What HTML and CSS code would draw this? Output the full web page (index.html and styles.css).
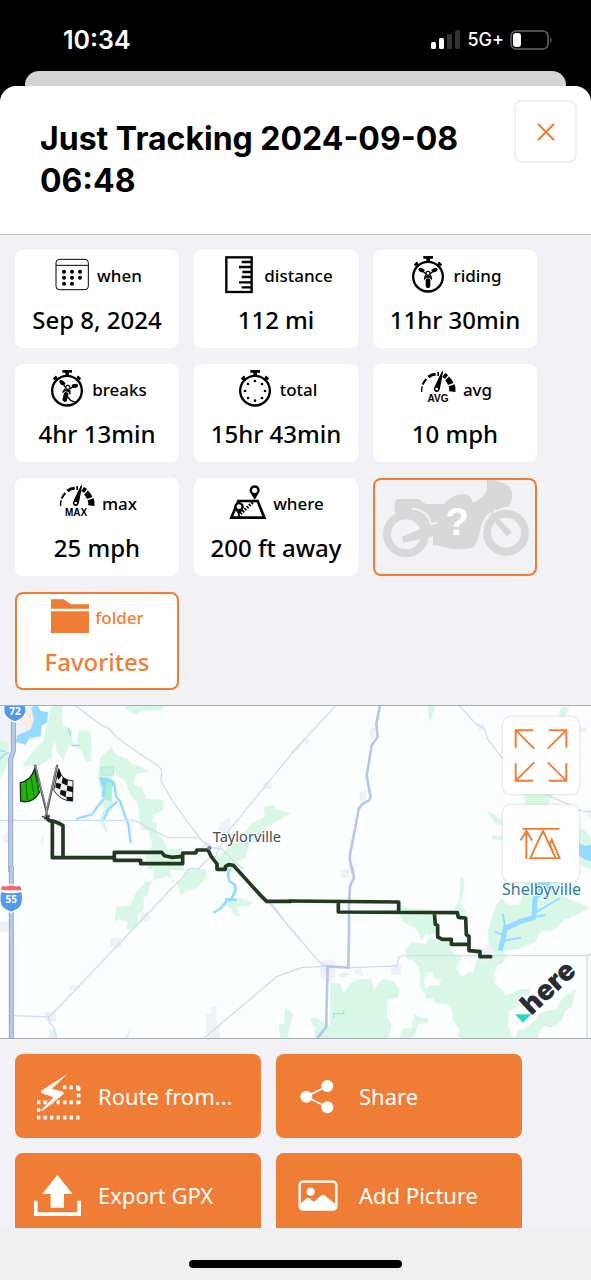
FILE: index.html
```
<!DOCTYPE html>
<html lang="en">
<head>
<meta charset="utf-8">
<meta name="viewport" content="width=device-width, initial-scale=1">
<title>Just Tracking 2024-09-08 06:48</title>
<link rel="stylesheet" href="styles.css">
</head>
<body>
<svg class="defs" aria-hidden="true">
  <symbol id="stopwatch" viewBox="0 0 120 120">
    <circle cx="60" cy="65" r="44.500" fill="none" stroke="#000" stroke-width="7"/>
    <path d="M46 3h29v8h-9v9H55v-9h-9z"/>
    <path d="M20 31l9-9M100 31l-9-9M25 26l7 8M95 26l-7 8" stroke="#000" stroke-width="7"/>
  </symbol>
  <symbol id="bike-front" viewBox="0 0 120 120">
    <path d="M31 43q0-5 7-5l9 4q6 4 1 8-7 4-12 0-5-3-5-7zM89 43q0-5-7-5l-9 4q-6 4-1 8 7 4 12 0 5-3 5-7z"/>
    <path d="M44 49l10 8M76 49l-10 8M53 60l-4 13M67 60l4 13" stroke="#000" stroke-width="4" fill="none"/>
    <circle cx="60" cy="55" r="6" fill="#fff" stroke="#000" stroke-width="4"/>
    <path d="M51 62h18l3 13-7-7H55l-7 7z"/>
    <rect x="53" y="70" width="14" height="29" rx="6"/>
  </symbol>
  <symbol id="gauge" viewBox="0 0 120 120">
    <g fill="none" stroke="#000">
      <path d="M11 69q-1-10 2-17" stroke-width="4"/>
      <path d="M14 47q4-10 11-17" stroke-width="6"/>
      <path d="M31 24q10-8 22-8" stroke-width="9"/>
      <path d="M58 15h5" stroke-width="12"/>
      <path d="M77 18l9 6" stroke-width="15"/>
      <path d="M87 29q8 7 11 16" stroke-width="17"/>
      <path d="M101 49q3 9 2 19" stroke-width="19"/>
      <path d="M57 58l16-49" stroke-width="4"/>
    </g>
    <path d="M75 3l-3 25-7 34q-4 10-13 6-7-5-3-13l14-30z"/>
    <circle cx="56" cy="60" r="4" fill="#fff"/>
  </symbol>
</svg>

<header class="status">
  <span class="clock">10:34</span>
  <span class="status-right">
    <svg class="signal" viewBox="0 0 30 20" aria-hidden="true"><g fill="#fff"><rect y="12" width="5" height="7" rx="1.500"/><rect x="8" y="8" width="5" height="11" rx="1.500"/></g><g fill="#333"><rect x="16" y="4" width="5" height="15" rx="1.500"/><rect x="24" width="5" height="19" rx="1.500"/></g></svg>
    <span class="network">5G+</span>
    <svg class="battery" viewBox="0 0 42 20" aria-hidden="true"><rect x="1" y="1" width="37" height="18" rx="5" fill="none" stroke="#666" stroke-width="1.500"/><rect x="3" y="3" width="8" height="14" rx="3" fill="#fff"/><path d="M40 7q3 3 0 6z" fill="#666"/></svg>
  </span>
</header>
<div class="back-sheet"></div>
<main class="sheet">
  <div class="title-bar">
    <h1>Just Tracking 2024-09-08 06:48</h1>
    <button class="close" aria-label="Close"><svg viewBox="0 0 18 18"><path d="M1 1l16 16M17 1L1 17"/></svg></button>
  </div>

  <section class="stats">
    <div class="card">
      <div class="label"><svg viewBox="0 0 120 120"><rect x="12" y="13" width="97" height="91" rx="10" fill="none" stroke="#000" stroke-width="3"/><path d="M12 31h97" stroke="#000" stroke-width="3"/><path d="M36 50h.1M60 50h.1M84 50h.1M36 68h.1M60 68h.1M84 68h.1M36 86h.1M60 86h.1" stroke="#000" stroke-width="12" stroke-linecap="round"/></svg><span>when</span></div>
      <div class="value">Sep 8, 2024</div>
    </div>
    <div class="card">
      <div class="label"><svg viewBox="0 0 120 120"><rect x="22" y="7" width="76" height="104" fill="none" stroke="#000" stroke-width="7"/><path d="M68 21h30M60 36h38M70 51h28M68 66h30M60 82h38M68 97h30" stroke="#000" stroke-width="7"/></svg><span>distance</span></div>
      <div class="value">112 mi</div>
    </div>
    <div class="card">
      <div class="label"><svg viewBox="0 0 120 120"><use href="#stopwatch"/><use href="#bike-front"/></svg><span>riding</span></div>
      <div class="value">11hr 30min</div>
    </div>
    <div class="card">
      <div class="label"><svg viewBox="0 0 120 120"><use href="#stopwatch"/><g transform="rotate(14 60 65)"><use href="#bike-front"/></g><path d="M62 84l9 10 12 5" fill="none" stroke="#000" stroke-width="4"/></svg><span>breaks</span></div>
      <div class="value">4hr 13min</div>
    </div>
    <div class="card">
      <div class="label"><svg viewBox="0 0 120 120"><use href="#stopwatch"/><path d="M60 36h.1M81 45h.1M90 66h.1M81 87h.1M60 95h.1M39 87h.1M30 66h.1M39 45h.1" stroke="#000" stroke-width="8" stroke-linecap="round"/></svg><span>total</span></div>
      <div class="value">15hr 43min</div>
    </div>
    <div class="card">
      <div class="label"><svg viewBox="0 0 120 120"><use href="#gauge"/><text class="gauge-text" x="60" y="100">AVG</text></svg><span>avg</span></div>
      <div class="value">10 mph</div>
    </div>
    <div class="card">
      <div class="label"><svg viewBox="0 0 120 120"><use href="#gauge"/><text class="gauge-text" x="57" y="100">MAX</text></svg><span>max</span></div>
      <div class="value">25 mph</div>
    </div>
    <div class="card">
      <div class="label"><svg viewBox="0 0 120 120"><path d="M31 54h58l20 50H10z" fill="none" stroke="#000" stroke-width="8"/><path d="M31 99l48-46" stroke="#000" stroke-width="9" stroke-dasharray="5 4"/><path d="M80 50L67 29a15 15 0 1 1 26 0zM33 97L21 79a14 14 0 1 1 24 0z" /><circle cx="80" cy="22" r="8" fill="#fff"/><circle cx="33" cy="71" r="7" fill="#fff"/></svg><span>where</span></div>
      <div class="value">200 ft away</div>
    </div>
    <button class="card bike" aria-label="Choose motorcycle">
      <svg viewBox="45 40 478 282">
        <g fill="none" stroke="#d8d8d8" stroke-width="24"><circle cx="137" cy="203" r="57"/><circle cx="437" cy="198" r="57"/></g>
        <path d="M103 110q1-13 14-13h60q10 11 21 15h54q22-30 58-30 23 2 28 26 32-13 42-39V38q66 4 75 38 4 22-9 44-24 0-34 10l-9-2-5 12 57 57-16 12-51-61q-20 6-27 36-8 46-25 59-50 13-107-8l-11 1v-27l-89 19-4-18 75-31-10-5 14-3q-28-26-80-25-16 3-21-14z" fill="#d8d8d8"/>
        <path d="M155 126q48 4 57 47l18-6" fill="none" stroke="#f2f1f6" stroke-width="6"/>
        <path d="M368 195q-2-44 26-56" fill="none" stroke="#f2f1f6" stroke-width="5"/>
        <text x="290" y="206" class="unknown">?</text>
      </svg>
    </button>
    <button class="card folder">
      <span class="label"><svg viewBox="0 0 120 120"><path d="M3 7h38l22 15h54v13H3zM3 43h114v65H3z" fill="#ef7d36"/></svg><span>folder</span></span>
      <span class="value">Favorites</span>
    </button>
  </section>

  <section class="map" aria-label="Route map">
    <svg class="map-canvas" viewBox="0 0 1773 996" preserveAspectRatio="xMidYMid slice">
      <rect width="1773" height="999" fill="#fbfdff"/>
      <g transform="translate(0 -14)">
        <path d="M0 0h120l-20 40 20 50-60 35-60-10z" fill="#eff2f9"/>
        <path d="M72 40l25-5 8 28-22 22-15-20z" fill="#f9ecdd"/>
        <g fill="#d8f7e7">
          <path d="M0 115l28 8-4 60-24 55zM155 10h30l3 60 27 15 3 38 12 8 5-45 35 3 5 35-2 55-15 2-15-35-35-14-8 20-10 25-20-28-5-30-8 20-3 30-37 25-50 0 32-45 30-30 15-60z"/>
          <path d="M375 22l10-12h115l-17 15-60 5-15 11zM300 170l35-33 13 23 30 10 22 20 15 2 35 18-43 8-5 33 25 10 12 33 33 0 20 5-5 28-27 14-5 48-33-4-10-80-22-25-15-42-18-10-20-30 0 125-25 32 10 35-5 2-20-33 15-35-18-100z"/>
          <path d="M435 355l35 10 0 30 20 20 12 30 45-5 5 68-110-5-5-40 20-30z"/>
          <path d="M650 470l30-25 10-30 30-10 35-38 40-20-5-30 30-5 10 12 42 12-35 20-40 25 15 25-65 22-10 40-30 17-10 30-45-10z"/>
        </g>
        <path d="M303 197h38v24h-38z" fill="#c6f3df" stroke="#aaeacd" stroke-width="3"/>
        <path d="M110 10l12 18 22 5-2 30-17 10-3 32-35 7-10 18-30-8 5-20 30-13 10-5 10-30-8-34z" fill="#95dbff"/>
        <path d="M0 148l16 3M0 175l10-14 16-8M205 80l7 25M215 132h25" fill="none" stroke="#95dbff" stroke-width="4"/>
        <path d="M296 228l28 2 20 10-12 30-10 28-18-15 5-20z" fill="#95dbff"/>
        <path d="M228 353l48-14 18-26 18-20M343 245l5 40 12 15 17 50 8 20 7 55M352 300l-28 25-12 30" fill="none" stroke="#95dbff" stroke-width="7"/>
        <path d="M320 240l16 5-2 55-20-8z" fill="#a7efd6"/>
        <path d="M660 365l30-20v35l-20 25-15-15zM790 245h25v18h-25zM10 400l15-10v35H10zM120 420l10-20v40zM600 435l35-12 5 20-30 10z" fill="#eef1f8"/>
        <g fill="none" stroke="#d0def1" stroke-width="4">
          <path d="M225 12l80 60 22 9 22 26 65 47 64 42 7 12-2 33 40 66 75 102 30 32M0 357h405l48 27 50 25h92l40 30 30 3 35 38 30 22M900 128l-108 130-107 132-27 50-13 30"/>
          <path d="M560 510l10-8 25 1 40-40"/>
        </g>
        <path d="M40 0v150l-8 22v340" fill="none" stroke="#8fa4cb" stroke-width="15"/>
        <path d="M40 0v150l-8 22v340" fill="none" stroke="#b7c8e3" stroke-width="10"/>
      </g>
      <g transform="translate(873 -14)">
        <path d="M410 12h25l-10 30-8 18-4-25zM805 30l15-15 15 8-10 15-10 20-10-12zM695 272h95l-22 40-60 5zM588 332l18 3 18 18 20 5v15l-30-5zM603 402l42 5v12l-40-5zM860 385l15-5 25 30v95l-30-15z" fill="#d8f7e7"/>
        <path d="M235 85l17-8v35h-15zM205 275l20-10v35h-18zM30 118l18-8 12 12-20 8zM562 65l18 2v25l-18-5zM862 78h25v15h-25zM888 322h12v40l-12-20zM150 505h25v10h-25z" fill="#eef1f8"/>
        <path d="M862 425l20 8 18-3v50l-20-6-18-14z" fill="#95dbff"/>
        <path d="M135 12L0 158M504 12l53 58 24 12 8 30 46 60M762 277l75 35 40 19h23" fill="none" stroke="#d0def1" stroke-width="4"/>
        <path d="M267 12l-11 55 4 40-18 25-8 50-7 40 7 40 5 25-5 10-20 11-11 15-10 55-15 75-2 18 9 45" fill="none" stroke="#b8c8e4" stroke-width="8"/>
      </g>
      <g transform="translate(0 490)">
        <path d="M460 0h35l17 5 5 35 30-10 10-25 20-5h42v25l-28 30-35 10-10 15-10-15-2-20-20-17-15-8-28 10-15 5-10 20 0 20-15 10v30l-17 25 0 25-15 15-22-2 7-20-30-10-10 15 5-50 42-5 15-35 17-20 13-15 25-5zM690 115l-15-5 25-27 30 5 30 12-15 12-28-3-5 10 8 20-15 2zM147 482l15-3 8 28h-24zM372 507l22-30-10 30zM855 415l25 18-12 40-5 34h-22l-6-40 18-5z" fill="#d8f7e7"/>
        <path d="M330 207h33v28h-33zM425 128h23v28h-33zM208 348h32v15h-32zM133 428h35v28h-28zM618 433h15v-20h16v55h10v38h-30l-12-25zM0 157h28v30H0z" fill="#eef1f8"/>
        <path d="M688 0l-4 15 4 20 17 12 2 15-12 25-18 12-15 18-22 14M675 90l35 2" fill="none" stroke="#95dbff" stroke-width="8"/>
        <path d="M565 0l-18 25-30 30-345 363-26 25-121-5M146 443l2 18 14 12 8 34M612 507l218-185 70-25M800 92l100 118" fill="none" stroke="#d0def1" stroke-width="4"/>
        <path d="M34-10v525" fill="none" stroke="#8fa4cb" stroke-width="15"/>
        <path d="M34-10v525" fill="none" stroke="#b7c8e3" stroke-width="10"/>
      </g>
      <g transform="translate(873 490)">
        <g fill="#d8f7e7">
          <path d="M118 340l30 3 10 30 20-30 25-15 38 2 10 30 20-30 35 5 20 25-5 25-30 5-5 50 15 25-10 67H105l-5-25-30-5 2-25-15-25 15-8 45 25zM140 320l15-10 20 3-15 12zM0 430l8 5-8 18z"/>
          <g transform="translate(297 36)">
            <path d="M28 67l27 15 70 2 8 30 5 40-15 8-15-8-5 12-10 8-14-32-35-17-17-25zM212-16l10 10-2 40-8 35 15 20-5 12h-20l-8-22 14-22z"/>
            <path d="M45 205l20-22 40 5 15-20 25 10 35 10 10 30 22 2 0 15-17 25 22 28 18-15 15 0 10-35 25-25 20-15 20 5 25 20-15 25-15 5-10 30 5 25 25 20 5 15 50-20 25-1-2 15-20 15-15 25-25 10-5 45 15 35-5 20-15 20H238l-10-20-25-22 5-20-18-30-8-45-45-4-8-15-22 0-4-25 20-15 25 2 5-20-20 0-5-20-18 3-10 25 10 25-10 10-10-20 0-40-5-20-20-20-15-3z"/>
            <path d="M293 150l17-55 10-25 15-18 20 18 30 0 20-40 0-30h110l0 42 85 38-55 28-20 5-25 25-20 10-25 0-20 35-25 10-25 10-40 4-15 15-22-10-12-30z"/>
            <path d="M27 471l10-28 28-5 8-40 20 12h23l-2 14-30 5-5 20-13 22zM375 471l8-22 25-10 30-25 10-20 50-10 20-35 40-28-5 25-8 30-20 13-10 30-30 20-25-5-15 25-2 12z"/>
            <path d="M-12 316l15-5 22 10-2 18-23 18z"/>
          </g>
        </g>
        <path d="M128 447v-14h30v-10" fill="none" stroke="#9cead2" stroke-width="4"/>
        <path d="M88 275l45-5v55l-25 15-20-20zM192 300l18-5 8 25-25-5zM300 285h30v32h-30zM545 235l30 5 20-20 20 35-40 30-20-20zM148 0h25v25h-20z" fill="#eef1f8"/>
        <path d="M737 36h38l8 22-28 16-14-15z" fill="#95dbff"/>
        <g fill="none" stroke="#95dbff" stroke-linejoin="round">
          <path d="M627 244l8-30 8-38 26-10 20-10 40-12 3-55 20-28" stroke-width="15"/>
          <path d="M612 188l24 8M635 132l8 44M640 214l50-9M738 142l25-5M732 130l35-20 40-24" stroke-width="6"/>
        </g>
        <path d="M-73 92L-63 96 0 180l93 107 42 6M0 307l30-12 85-5 60 5 144-5 4-25 10-6h577M888 259v248M888 259l12-7" fill="none" stroke="#d0def1" stroke-width="4"/>
        <path d="M182-10l7 35-12 25-3 60v80l-2 105-62-4-4 160v20l-8 12-20 24" fill="none" stroke="#b8c8e4" stroke-width="8"/>
      </g>
      <g transform="translate(0 -2)">
        <g fill="none" stroke="#23391f" stroke-width="11" stroke-linejoin="round" stroke-linecap="round">
          <path d="M140 338l8 8 15 2 18 8 8 5v95M157 348v109h186v-16h142l8 10 22 5 33-3v22H422v-10h-79v-12M548 455v-12h39l4-9h33l10 20 17 22v16h25v-8l10-6 14 2 76 84 24 24h73"/>
          <path d="M870 587l326 3v30M1015 588v32l357 2 3 14 22 2 2 50 8 5v43l33 3v15h32M1303 622l3 35 7 3v35l14 7h27v15h53"/>
        </g>
        <path d="M105 178l38 155M172 178l-35 155" stroke="#555" stroke-width="7"/>
        <path d="M106 180l38 150M171 180l-35 150" stroke="#bbb" stroke-width="2"/>
        <path d="M126 333l22 6M150 331l-18 10" stroke="#333" stroke-width="4"/>
        <path d="M104 192q-13 35-43 40l1 55q35 10 56-26z" fill="#22b40c" stroke="#222" stroke-width="4"/>
        <path d="M93 214l9 58M78 228l4 58M111 210l4 50" stroke="#127a05" stroke-width="4"/>
        <path d="M176 190q10 38 43 36l-1 61q-34 2-57-32z" fill="#eee" stroke="#333" stroke-width="3"/>
        <path d="M176 191l9 19-9 14-6-12zM188 215l16 10-2 16-17-8zM169 232l15 4-4 16-14-6zM202 241l17 3v17l-19-5zM182 253l17 5-2 18-17-9zM199 274l19 1v13l-17-2z" fill="#111"/>
        <circle cx="628" cy="428" r="6" fill="#777c9f"/>
        <text x="638" y="411" class="town">Taylorville</text>
        <text x="1506" y="568" class="town lake">Shelbyville</text>
        <g stroke="#fff" stroke-width="4">
          <path d="M14-4h60q8 20 2 30-8 16-31 24-24-8-32-24-5-14 1-30z" fill="#5399ed"/>
          <path d="M2 558q32 8 64 0 6 38-8 50-12 9-24 13-14-4-25-13-15-15-7-50z" fill="#5399ed"/>
          <path d="M5 539q10 5 29-1 18 6 28 1l5 18H1z" fill="#ed6a6b"/>
        </g>
        <text class="shield" x="45" y="28">72</text>
        <text class="shield" x="34" y="594">55</text>
        <g transform="translate(1594 932) rotate(-43)"><text class="here">here</text></g>
        <path d="M1545 927h49l-25 25z" fill="#2bd3c8"/>
      </g>
    </svg>
    <div class="map-tools">
      <button aria-label="Full screen"><svg viewBox="0 0 78 78"><path d="M13 31V13h18M13 13l19 19M47 13h18v18M65 13L46 32M13 47v18h18M13 65l19-19M47 65h18V47M65 65L46 46"/></svg></button>
      <button aria-label="Elevation"><svg viewBox="0 0 78 78"><path d="M20 24h38M24 55V26M18 36l6-10 6 10M28 54l13-28 13 28zM48 40l2-5 8 19h-4M48 40l6 14"/></svg></button>
    </div>
  </section>

  <section class="actions">
    <button><svg viewBox="0 0 150 150"><path d="M90 49h50M137 49v50M12 94h128M12 117h20M12 140h128" fill="none" stroke="#fff" stroke-width="11" stroke-dasharray="10 9.600"/><path d="M103 9L24 60v6l38 13-40 40h7l63-50v-6L57 53z" fill="#fff" stroke="#ef7d36" stroke-width="3" paint-order="stroke"/></svg><span>Route from...</span></button>
    <button><svg viewBox="0 0 150 150"><path d="M100 45L37 77l63 32" fill="none" stroke="#fff" stroke-width="5"/><g fill="#fff"><circle cx="100" cy="45" r="18"/><circle cx="37" cy="77" r="18"/><circle cx="100" cy="109" r="18"/></g></svg><span>Share</span></button>
    <button><svg viewBox="0 0 150 150"><path d="M73 15l46 57H93v41H53V72H27z" fill="#fff"/><path d="M14 92H3v46h141V92h-11v35H14z" fill="#fff"/></svg><span>Export GPX</span></button>
    <button><svg viewBox="0 0 150 150"><rect x="17" y="35" width="110" height="84" rx="10" fill="none" stroke="#fff" stroke-width="7"/><circle cx="50" cy="65" r="12" fill="#fff"/><path d="M21 100l18-16 8 1 12 11 24-21h8l32 26v17H21z" fill="#fff"/></svg><span>Add Picture</span></button>
  </section>
</main>
<footer class="home"><div class="home-bar"></div></footer>
</body>
</html>
```

FILE: styles.css
```
* { box-sizing: border-box; }
body {
  margin: 0;
  height: 100vh;
  display: flex;
  flex-direction: column;
  background: #000;
  color: #000;
  font-family: "Noto Sans", "Open Sans", sans-serif;
}
svg { display: block; flex: none; }
button { font: inherit; color: inherit; border: 0; margin: 0; padding: 0; cursor: pointer; }
.defs { position: absolute; width: 0; height: 0; }

.status {
  flex: none;
  height: 71px;
  padding: 8px 39px 0 63px;
  display: flex;
  align-items: center;
  justify-content: space-between;
  color: #fff;
  font-family: Inter, sans-serif;
}
.clock { font-size: 25px; font-weight: 600; }
.status-right { display: flex; align-items: center; gap: 6px; }
.network { font-size: 18px; font-weight: 500; }
.signal { width: 30px; height: 20px; }
.battery { width: 42px; height: 20px; }

.back-sheet { flex: none; height: 15px; margin: 0 25px; border-radius: 14px 14px 0 0; background: #d4d4d4; }
.sheet {
  flex: 1;
  min-height: 0;
  overflow-y: auto;
  scrollbar-width: none;
  background: #f2f1f6;
  border-radius: 16px 16px 0 0;
}
.title-bar {
  min-height: 148px;
  padding: 14px 14px 32px 40px;
  display: flex;
  align-items: flex-start;
  justify-content: space-between;
  gap: 32px;
  background: #fff;
  border-bottom: 1px solid #bdbdc2;
}
h1 { margin: 18px 0 0; font: 700 32px/42px Inter, sans-serif; }
.close {
  flex: none;
  width: 63px;
  height: 63px;
  display: grid;
  place-items: center;
  background: #fff;
  border: 2px solid #f0f0f0;
  border-radius: 8px;
}
.close svg { width: 18px; height: 18px; fill: none; stroke: #ef7d36; stroke-width: 2; }

.stats { display: grid; grid-template-columns: repeat(auto-fill, 164px); gap: 16px 15px; padding: 15px; }
.card {
  height: 98px;
  padding: 4px 0;
  display: flex;
  flex-direction: column;
  align-items: center;
  background: #fff;
  border-radius: 8px;
  white-space: nowrap;
}
.label { height: 42px; display: flex; align-items: center; gap: 5px; font-size: 17px; font-weight: 500; }
.label svg { width: 40px; height: 40px; }
.value { font-size: 24px; line-height: 48px; font-weight: 500; }
.folder { padding: 2px 0; border: 2px solid #ef7d36; color: #ef7d36; }
.bike { padding: 0; background: transparent; border: 2px solid #ef7d36; overflow: hidden; }
.bike svg { width: 100%; height: 100%; }
.unknown { font: 700 116px "Liberation Sans", sans-serif; fill: #fff; text-anchor: middle; }
.gauge-text { font: 700 30px "Liberation Sans", sans-serif; text-anchor: middle; }

.map { position: relative; border: solid #a9a9ae; border-width: 1px 0; }
.map-canvas { width: 100%; height: auto; }
.map-tools { position: absolute; top: 11px; right: 12px; display: grid; gap: 11px; }
.map-tools button { width: 76px; height: 77px; background: #fff; border-radius: 8px; box-shadow: 0 0 3px #c8c8cc; }
.map-tools svg { width: 100%; height: 100%; fill: none; stroke: #ef7d36; stroke-width: 2; }
.town { font: 400 44px "Noto Sans", sans-serif; fill: #4b4b55; stroke: #fff; stroke-width: 6px; paint-order: stroke; }
.lake { font-size: 48px; fill: #2d75a8; }
.shield { font: 700 30px "Noto Sans", sans-serif; fill: #fff; text-anchor: middle; }
.here { font: 900 84px Inter, sans-serif; fill: #292c37; stroke: #fff; stroke-width: 10px; paint-order: stroke; }

.actions { display: grid; grid-template-columns: repeat(auto-fill, 246px); gap: 15px; padding: 15px; }
.actions button {
  height: 84px;
  padding: 0 18px;
  display: flex;
  align-items: center;
  gap: 15px;
  background: #ef7d36;
  color: #fff;
  border-radius: 8px;
  font-size: 22px;
}
.actions svg { width: 50px; height: 50px; }

.home { flex: none; height: 52px; padding-top: 32px; background: #f0f0f0; }
.home-bar { width: 36%; height: 8px; margin: 0 auto; border-radius: 4px; background: #000; }
```
